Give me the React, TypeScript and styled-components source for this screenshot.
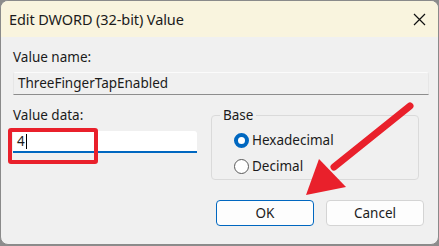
import React from "react";
import styled, { createGlobalStyle } from "styled-components";

const GlobalStyle = createGlobalStyle`
  html, body {
    margin: 0;
    padding: 0;
    background: #8c8c8c;
  }
  body {
    font-family: "Noto Sans", "Open Sans", sans-serif;
    color: #1b1b1b;
  }
`;

const Window = styled.div`
  position: relative;
  width: 437px;
  height: 243px;
  background: #f0f0f0;
  border: 1px solid #8a8a8a;
  border-radius: 8px;
  overflow: hidden;
  display: flex;
  flex-direction: column;
`;

const TitleBar = styled.div`
  height: 36px;
  flex: none;
  background: #f9f4de;
  display: flex;
  align-items: center;
  justify-content: space-between;
  padding: 0 11px 0 8px;
`;

const Title = styled.span`
  font-size: 14.5px;
  letter-spacing: -0.1px;
`;

const CloseButton = styled.button`
  width: 16px;
  height: 16px;
  border: none;
  background: transparent;
  padding: 0;
  display: flex;
  align-items: center;
  justify-content: center;
`;

const Body = styled.div`
  padding: 11px 12px 0 12px;
  display: flex;
  flex-direction: column;
`;

const Label = styled.div`
  font-size: 13.5px;
  line-height: 19px;
  height: 19px;
`;

const NameField = styled.div`
  margin-top: 5px;
  height: 21px;
  width: 410px;
  border-top: 1px solid #fbfbfb;
  border-left: 1px solid #e6e6e6;
  border-right: 1px solid #e6e6e6;
  border-bottom: 1px solid #8d8d8d;
  border-radius: 3px 3px 0 0;
  font-size: 13.5px;
  line-height: 21px;
  padding-left: 4px;
  box-sizing: content-box;
`;

const Row = styled.div`
  display: flex;
  gap: 14px;
  margin-top: 11px;
`;

const Column = styled.div`
  flex: none;
  width: 184px;
  display: flex;
  flex-direction: column;
`;

const DataField = styled.div`
  margin-top: 6px;
  height: 20px;
  background: #ffffff;
  border-bottom: 2px solid #0067c0;
  border-radius: 3px 3px 0 0;
  font-size: 13.5px;
  line-height: 20px;
  padding-left: 4px;
  display: flex;
  align-items: center;
`;

const Caret = styled.span`
  display: inline-block;
  width: 1px;
  height: 15px;
  background: #000;
  margin-left: 1px;
`;

const Group = styled.fieldset`
  flex: none;
  margin: 0;
  margin-top: 1px;
  width: 184px;
  height: 67px;
  border: 1px solid #dadada;
  border-radius: 4px;
  padding: 4px 0 0 22px;
  box-sizing: content-box;
`;

const Legend = styled.legend`
  font-size: 13.5px;
  padding: 0 3px;
  margin-left: -14px;
  line-height: 16px;
`;

const RadioRow = styled.label`
  display: flex;
  align-items: center;
  gap: 3px;
  height: 26px;
  font-size: 13.5px;
`;

const RadioDot = styled.span<{ checked?: boolean }>`
  width: 15px;
  height: 15px;
  box-sizing: border-box;
  border-radius: 50%;
  border: ${(p) => (p.checked ? "4px solid #0067c0" : "1px solid #5a5a5a")};
  background: #ffffff;
`;

const ButtonRow = styled.div`
  display: flex;
  justify-content: flex-end;
  gap: 12px;
  margin-top: 20px;
  padding-right: 2px;
`;

const Button = styled.button<{ primary?: boolean }>`
  width: 98px;
  height: 26px;
  border-radius: 4px;
  border: 1px solid ${(p) => (p.primary ? "#0067c0" : "#d4d4d4")};
  background: #fdfdfd;
  font-family: "Noto Sans", "Open Sans", sans-serif;
  font-size: 13.5px;
  color: #1b1b1b;
  padding: 0;
`;

const Highlight = styled.div`
  position: absolute;
  left: 7px;
  top: 127px;
  width: 82px;
  height: 28px;
  border: 4px solid #e9202b;
  border-radius: 3px;
  pointer-events: none;
`;

const Overlay = styled.svg`
  position: absolute;
  left: 0;
  top: 0;
  pointer-events: none;
`;

export default function App() {
  return (
    <>
      <GlobalStyle />
      <Window>
        <TitleBar>
          <Title>Edit DWORD (32-bit) Value</Title>
          <CloseButton aria-label="Close">
            <svg width="13" height="13" viewBox="0 0 13 13">
              <path d="M1 1 L12 12 M12 1 L1 12" stroke="#111" strokeWidth="1.2" />
            </svg>
          </CloseButton>
        </TitleBar>
        <Body>
          <Label>Value name:</Label>
          <NameField>ThreeFingerTapEnabled</NameField>
          <Row>
            <Column>
              <Label>Value data:</Label>
              <DataField>
                4<Caret />
              </DataField>
            </Column>
            <Group>
              <Legend>Base</Legend>
              <RadioRow>
                <RadioDot checked />
                Hexadecimal
              </RadioRow>
              <RadioRow>
                <RadioDot />
                Decimal
              </RadioRow>
            </Group>
          </Row>
          <ButtonRow>
            <Button primary>OK</Button>
            <Button>Cancel</Button>
          </ButtonRow>
        </Body>
        <Highlight />
        <Overlay width="439" height="246" viewBox="0 0 439 246">
          <line
            x1="409"
            y1="105"
            x2="333"
            y2="166"
            stroke="#e9202b"
            strokeWidth="7"
            strokeLinecap="round"
          />
          <polygon points="305,194 318,158 345,186" fill="#e9202b" />
        </Overlay>
      </Window>
    </>
  );
}
